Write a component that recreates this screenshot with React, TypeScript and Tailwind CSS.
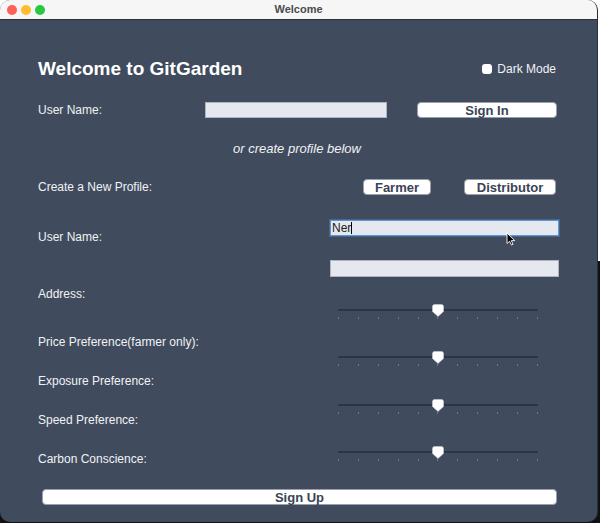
import React from "react";

// Fila de marcas bajo cada slider
const ticks = Array.from({ length: 11 });

function Slider() {
  return (
    <div className="relative ml-[8px] h-[16px] w-[200px]">
      <div className="absolute left-0 right-0 top-[5px] h-[2px] rounded-full bg-[#2c3545]" />
      <div className="absolute left-0 right-0 top-[13px] flex justify-between">
        {ticks.map((_, i) => (
          <span key={i} className="h-[2px] w-px bg-[#6f7889]" />
        ))}
      </div>
      <svg
        className="absolute left-[94px] top-0"
        width="12"
        height="13"
        viewBox="0 0 12 13"
      >
        <path
          d="M2.5 0.5 H9.5 Q11.5 0.5 11.5 2.5 V7.5 L6 12.5 L0.5 7.5 V2.5 Q0.5 0.5 2.5 0.5 Z"
          fill="#ffffff"
          stroke="#c9ccd3"
          strokeWidth="0.6"
        />
      </svg>
    </div>
  );
}

function PlainButton({ label, className }: { label: string; className: string }) {
  return (
    <button
      className={`flex h-[16px] shrink-0 items-center justify-center rounded-[4px] border border-[#9aa0ab] bg-white text-[13px] font-bold leading-none text-[#3b4356] ${className}`}
    >
      {label}
    </button>
  );
}

export default function App() {
  return (
    <div className="h-[523px] w-[600px] bg-[linear-gradient(to_bottom,#ffffff_50%,#111111_50%)] [font-family:'Liberation_Sans',Arial,sans-serif]">
      <div className="flex h-[522px] w-[598px] flex-col overflow-hidden rounded-[10px] border-r border-[#2a303b] bg-[#404b5e]">
        {/* Barra de título */}
        <div className="grid h-[20px] shrink-0 grid-cols-[1fr_auto_1fr] items-center border-b border-[#2c323d] bg-[#f6f6f6]">
          <div className="flex items-center gap-[4px] pl-[7px]">
            <span className="h-[10px] w-[10px] rounded-full bg-[#fe5f57]" />
            <span className="h-[10px] w-[10px] rounded-full bg-[#febc2e]" />
            <span className="h-[10px] w-[10px] rounded-full bg-[#28c840]" />
          </div>
          <span className="text-[11px] font-bold leading-none text-[#4b4b4b]">Welcome</span>
          <div />
        </div>

        <div className="flex flex-col pl-[38px] pr-[41px] text-[#f1f2f4]">
          {/* Encabezado */}
          <div className="mt-[38px] flex h-[22px] items-center justify-between">
            <h1 className="text-[19px] font-bold leading-[22px] text-white">
              Welcome to GitGarden
            </h1>
            <label className="flex items-center gap-[5px] text-[12px] leading-[14px]">
              <span className="h-[10px] w-[10px] rounded-[3px] bg-white" />
              Dark Mode
            </label>
          </div>

          {/* Inicio de sesión */}
          <div className="mt-[22px] flex h-[16px] items-center">
            <span className="w-[167px] shrink-0 text-[12px] leading-[14px]">User Name:</span>
            <div className="h-[16px] w-[182px] shrink-0 border border-[#aeb3bf] bg-[#e6e8f0]" />
            <PlainButton label="Sign In" className="ml-[30px] h-[15px] w-[140px]" />
          </div>

          <p className="mt-[23px] text-center text-[13px] italic leading-[15px]">
            or create profile below
          </p>

          {/* Crear perfil */}
          <div className="mt-[23px] flex h-[16px] items-center">
            <span className="flex-1 text-[12px] leading-[14px]">Create a New Profile:</span>
            <PlainButton label="Farmer" className="w-[68px]" />
            <PlainButton label="Distributor" className="ml-[33px] w-[92px]" />
          </div>

          <div className="flex">
            {/* Etiquetas */}
            <div className="flex w-[292px] shrink-0 flex-col text-[12px] leading-[14px]">
              <span className="mt-[35px]">User Name:</span>
              <span className="mt-[43px]">Address:</span>
              <span className="mt-[34px]">Price Preference(farmer only):</span>
              <span className="mt-[25px]">Exposure Preference:</span>
              <span className="mt-[25px]">Speed Preference:</span>
              <span className="mt-[25px]">Carbon Conscience:</span>
            </div>

            {/* Controles */}
            <div className="flex w-[229px] shrink-0 flex-col">
              <div className="relative mt-[25px] flex h-[16px] items-center border border-[#5b97d6] bg-[#e6e8f0] pl-px shadow-[0_0_0_1px_rgba(91,151,214,0.35)]">
                <span className="text-[12px] leading-none text-[#222]">Ner</span>
                <span className="h-[12px] w-px bg-black" />
                <svg
                  className="absolute left-[175px] top-[11px]"
                  width="10"
                  height="14"
                  viewBox="0 0 10 14"
                >
                  <path
                    d="M1 1 V11.5 L3.6 9.2 L5.4 13 L7 12.3 L5.3 8.6 H8.8 Z"
                    fill="#000"
                    stroke="#fff"
                    strokeWidth="0.9"
                  />
                </svg>
              </div>
              <div className="mt-[24px] h-[17px] border border-[#aeb3bf] bg-[#e6e8f0]" />
              <div className="mt-[27px]">
                <Slider />
              </div>
              <div className="mt-[31px]">
                <Slider />
              </div>
              <div className="mt-[32px]">
                <Slider />
              </div>
              <div className="mt-[31px]">
                <Slider />
              </div>
            </div>
          </div>

          <PlainButton label="Sign Up" className="ml-[4px] mt-[23px] w-[515px]" />
        </div>
      </div>
    </div>
  );
}
